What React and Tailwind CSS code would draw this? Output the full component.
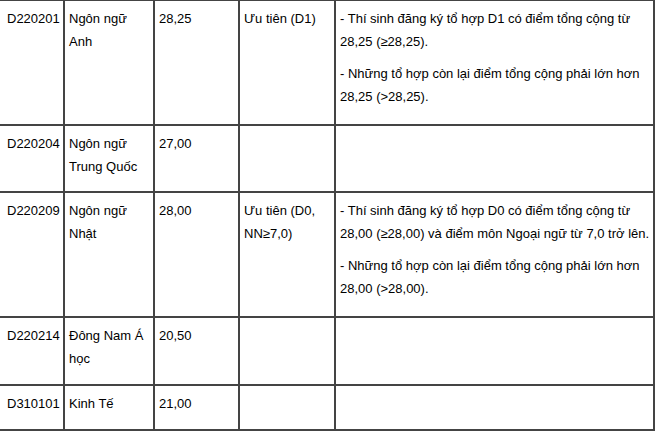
const rows = [
  {
    code: 'D220201',
    name: ['Ngôn ngữ', 'Anh'],
    score: '28,25',
    priority: ['Ưu tiên (D1)'],
    notes: [
      ['- Thí sinh đăng ký tổ hợp D1 có điểm tổng cộng từ', '28,25 (≥28,25).'],
      ['- Những tổ hợp còn lại điểm tổng cộng phải lớn hơn', '28,25 (>28,25).'],
    ],
  },
  {
    code: 'D220204',
    name: ['Ngôn ngữ', 'Trung Quốc'],
    score: '27,00',
    priority: [],
    notes: [],
  },
  {
    code: 'D220209',
    name: ['Ngôn ngữ', 'Nhật'],
    score: '28,00',
    priority: ['Ưu tiên (D0,', 'NN≥7,0)'],
    notes: [
      ['- Thí sinh đăng ký tổ hợp D0 có điểm tổng cộng từ', '28,00 (≥28,00) và điểm môn Ngoại ngữ từ 7,0 trở lên.'],
      ['- Những tổ hợp còn lại điểm tổng cộng phải lớn hơn', '28,00 (>28,00).'],
    ],
  },
  {
    code: 'D220214',
    name: ['Đông Nam Á', 'học'],
    score: '20,50',
    priority: [],
    notes: [],
  },
  {
    code: 'D310101',
    name: ['Kinh Tế'],
    score: '21,00',
    priority: [],
    notes: [],
  },
];

const rowHeights = ['h-[125px]', 'h-[67px]', 'h-[125px]', 'h-[68px]', 'h-[45px]'];

const Lines = ({ lines }) =>
  lines.length ? (
    <p className="mb-[9px]">
      {lines.map((line, i) => (
        <span key={i} className="block whitespace-nowrap">
          {line}
        </span>
      ))}
    </p>
  ) : null;

const Cell = ({ className = '', children }) => (
  <div className={`border-r-2 border-b-2 border-[#444] pt-[6px] ${className}`}>{children}</div>
);

export default function App() {
  return (
    <div className="h-[432px] w-[655px] overflow-hidden bg-white">
      <div
        className="-ml-[2px] -mt-[1px] grid w-[657px] grid-cols-[65px_90px_85px_96px_319px] border-t-2 border-l-2 border-[#444] text-[13px] leading-[23px] text-black"
        style={{ fontFamily: '"Liberation Sans", Arial, sans-serif' }}>
        {rows.map((row, rowInd) => (
          <div key={row.code} className="contents">
            <Cell className={`${rowHeights[rowInd]} pl-[7px]`}>
              <Lines lines={[row.code]} />
            </Cell>
            <Cell className={`${rowHeights[rowInd]} pl-[4px]`}>
              <Lines lines={row.name} />
            </Cell>
            <Cell className={`${rowHeights[rowInd]} pl-[4px]`}>
              <Lines lines={[row.score]} />
            </Cell>
            <Cell className={`${rowHeights[rowInd]} pl-[4px]`}>
              <Lines lines={row.priority} />
            </Cell>
            <Cell className={`${rowHeights[rowInd]} pl-[4px]`}>
              {row.notes.map((note, i) => (
                <Lines key={i} lines={note} />
              ))}
            </Cell>
          </div>
        ))}
      </div>
    </div>
  );
}
